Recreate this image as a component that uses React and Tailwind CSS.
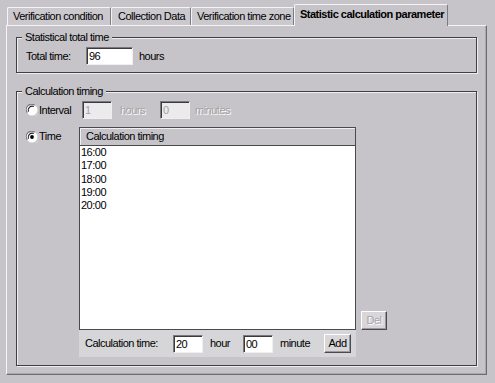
import React from "react";

const font = { fontFamily: '"Liberation Sans", Arial, sans-serif' };

function Radio({ checked }) {
  return (
    <svg width="12" height="12" viewBox="0 0 12 12" className="shrink-0">
      <circle cx="6" cy="6" r="5.5" fill="#ffffff" />
      <path d="M1.3 8.7 A5.3 5.3 0 0 1 8.7 1.3" stroke="#7a797d" strokeWidth="1.1" fill="none" />
      <path d="M2.4 7.8 A4.2 4.2 0 0 1 7.8 2.4" stroke="#1c1c1e" strokeWidth="1.1" fill="none" />
      <path d="M3.3 11.2 A5.4 5.4 0 0 0 11.2 3.3" stroke="#d9d8db" strokeWidth="1" fill="none" />
      {checked && <circle cx="6" cy="6" r="1.9" fill="#000" />}
    </svg>
  );
}

function Input({ value, w, disabled }) {
  return (
    <div
      className={`h-[18px] ${w} border-t border-l border-t-[#7a797d] border-l-[#7a797d] border-b border-r border-b-[#efeff0] border-r-[#efeff0] ${disabled ? "bg-[#ebeaec] text-[#a3a2a6]" : "bg-white text-black"} pl-[2px] leading-[16px] shadow-[inset_1px_1px_0_#3a3a3c]`}
    >
      {value}
    </div>
  );
}

function Button({ label, disabled, w }) {
  return (
    <div
      className={`h-[19px] ${w} flex items-center justify-center bg-[#d8d6d9] border-t border-l border-t-white border-l-white border-b border-r border-b-[#4a494d] border-r-[#4a494d] shadow-[inset_-1px_-1px_0_#9a999d] ${disabled ? "text-[#a5a4a8] [text-shadow:1px_1px_0_#ffffff]" : "text-black"}`}
    >
      {label}
    </div>
  );
}

function Tab({ label, w, pl }) {
  return (
    <div
      className={`h-[18px] ${w} ${pl} shrink-0 whitespace-nowrap flex items-center bg-[#cbc9cd] border-t border-l border-t-[#f4f4f6] border-l-[#f4f4f6] border-r border-r-[#7c7b7f] rounded-tl-[2px] rounded-tr-[2px] text-black`}
    >
      {label}
    </div>
  );
}

export default function App() {
  const times = ["16:00", "17:00", "18:00", "19:00", "20:00"];
  return (
    <div
      className="w-[495px] h-[383px] bg-[#c6c4c8] text-[11px] tracking-[-0.5px] text-black overflow-hidden"
      style={font}
    >
      {/* Tabs */}
      <div className="flex items-end h-[25px] pl-[7px] pt-[4px]">
        <Tab label="Verification condition" w="w-[104px]" pl="pl-[5px]" />
        <Tab label="Collection Data" w="w-[80px]" pl="pl-[6px]" />
        <Tab label="Verification time zone" w="w-[103px]" pl="pl-[5px]" />
        <div className="relative z-10 h-[22px] w-[154px] shrink-0 whitespace-nowrap -mb-[1px] pl-[5px] pb-[3px] flex items-center bg-[#c6c4c8] border-t border-l border-t-[#f4f4f6] border-l-[#f4f4f6] border-r border-r-[#7c7b7f] rounded-tl-[2px] rounded-tr-[2px] font-bold">
          Statistic calculation parameter
        </div>
      </div>

      {/* Panel */}
      <div className="ml-[6px] w-[481px] border-t border-l border-t-[#f4f4f6] border-l-[#f4f4f6] border-r border-b border-r-[#6e6d71] border-b-[#6e6d71] shadow-[inset_-1px_-1px_0_#a9a8ac] pl-[9px] pt-[11px] pb-[8px]">
        {/* Group 1 */}
        <div className="w-[461px] border border-[#3f3e42] shadow-[1px_1px_0_#eeeef0,inset_1px_1px_0_#eeeef0] pb-[7px]">
          <div className="-mt-[8px] ml-[5px] w-fit px-[3px] bg-[#c6c4c8] leading-[14px]">
            Statistical total time
          </div>
          <div className="flex items-center mt-[3px] pl-[9px]">
            <span className="w-[60px]">Total time:</span>
            <Input value="96" w="w-[47px]" />
            <span className="ml-[6px]">hours</span>
          </div>
        </div>

        {/* Group 2 */}
        <div className="mt-[18px] w-[461px] border border-[#3f3e42] shadow-[1px_1px_0_#eeeef0,inset_1px_1px_0_#eeeef0] pb-[8px]">
          <div className="-mt-[8px] ml-[5px] w-fit px-[3px] bg-[#c6c4c8] leading-[14px]">
            Calculation timing
          </div>
          {/* Interval row */}
          <div className="flex items-center mt-[3px] pl-[9px]">
            <label className="w-[56px] flex items-center gap-[1px]">
              <Radio />
              <span>Interval</span>
            </label>
            <Input value="1" w="w-[30px]" disabled />
            <span className="ml-[8px] w-[40px] text-[#a3a2a6] [text-shadow:1px_1px_0_#ffffff]">hours</span>
            <Input value="0" w="w-[30px]" disabled />
            <span className="ml-[5px] text-[#a3a2a6] [text-shadow:1px_1px_0_#ffffff]">minutes</span>
          </div>
          {/* Time row */}
          <div className="flex mt-[8px] pl-[9px]">
            <label className="w-[53px] flex items-center gap-[1px] h-[19px]">
              <Radio checked />
              <span>Time</span>
            </label>
            <div className="w-[277px] flex flex-col">
              <div className="h-[19px] flex items-center pl-[6px] border-t border-l border-r border-b border-[#4a494d] bg-[#c6c4c8] shadow-[inset_1px_1px_0_#efeff0]">
                Calculation timing
              </div>
              <div className="h-[184px] bg-white border-l border-r border-b border-[#4a494d] pl-[1px]">
                {times.map((t) => (
                  <div key={t} className="leading-[13.25px]">
                    {t}
                  </div>
                ))}
              </div>
              <div className="h-[27px] flex items-center bg-[#d6d5d8] pl-[6px]">
                <span className="w-[88px]">Calculation time:</span>
                <Input value="20" w="w-[30px]" />
                <span className="ml-[7px] w-[33px]">hour</span>
                <Input value="00" w="w-[30px]" />
                <span className="ml-[7px] w-[44px]">minute</span>
                <Button label="Add" w="w-[27px]" />
              </div>
            </div>
            <div className="self-end mb-[27px] ml-[5px]">
              <Button label="Del" disabled w="w-[26px]" />
            </div>
          </div>
        </div>
      </div>
    </div>
  );
}
